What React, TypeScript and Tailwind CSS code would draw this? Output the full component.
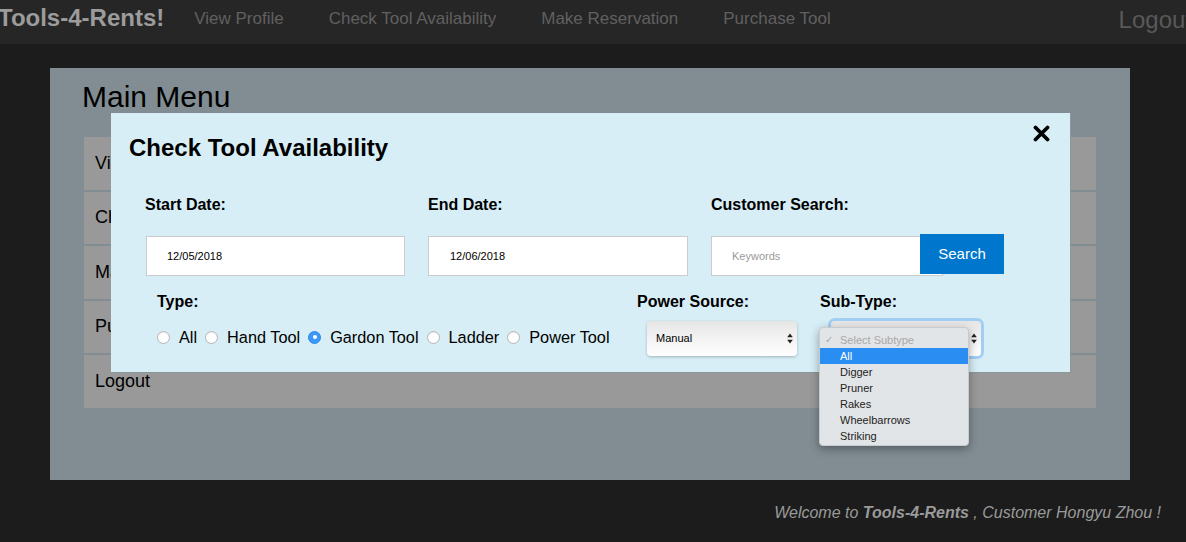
import { Fragment } from 'react';

const NAV_LINKS = ['View Profile', 'Check Tool Availability', 'Make Reservation', 'Purchase Tool'];
const MENU_ITEMS = ['View Profile', 'Check Tool Availability', 'Make Reservation', 'Purchase Tool', 'Logout'];
const TOOL_TYPES = ['All', 'Hand Tool', 'Gardon Tool', 'Ladder', 'Power Tool'];
const SUB_TYPES = ['All', 'Digger', 'Pruner', 'Rakes', 'Wheelbarrows', 'Striking'];

function SelectArrows() {
  return (
    <svg width="6" height="11" viewBox="0 0 6 11" className="shrink-0">
      <path d="M3 0.5 L5.8 4.2 L0.2 4.2 Z" fill="#222" />
      <path d="M3 10.5 L5.8 6.8 L0.2 6.8 Z" fill="#222" />
    </svg>
  );
}

function Radio({ checked }: { checked?: boolean }) {
  return checked ? (
    <span className="w-[13px] h-[13px] rounded-full bg-[#3b99fc] border border-[#2f86e6] flex items-center justify-center shrink-0">
      <span className="w-[4px] h-[4px] rounded-full bg-white" />
    </span>
  ) : (
    <span className="w-[13px] h-[13px] rounded-full bg-white border border-[#b5b5b5] shadow-[inset_0_1px_1px_rgba(0,0,0,0.08)] shrink-0" />
  );
}

export default function App() {
  return (
    <div
      className="w-[1186px] h-[542px] bg-[#1c1c1c] overflow-hidden flex flex-col"
      style={{ fontFamily: '"Liberation Sans", Arial, sans-serif' }}
    >
      {/* Navbar */}
      <div className="h-[44px] bg-[#262626] flex items-center overflow-hidden shrink-0">
        <span className="ml-[-2px] text-[24px] font-bold text-[#9c9c9c] leading-none pb-[9px] shrink-0">
          Tools-4-Rents!
        </span>
        <div className="flex items-center ml-[30px] gap-[45px] pb-[7px]">
          {NAV_LINKS.map((l) => (
            <span key={l} className="text-[17px] text-[#606060] whitespace-nowrap">
              {l}
            </span>
          ))}
        </div>
        <span className="ml-auto mr-[-6px] text-[24px] text-[#595959] leading-none pb-[5px] shrink-0">
          Logout
        </span>
      </div>

      {/* Main panel */}
      <div className="mt-[24px] ml-[50px] w-[1080px] h-[412px] bg-[#818d93] relative shrink-0">
        <h1 className="pl-[32px] pt-[12px] text-[30px] leading-[34px] text-black">Main Menu</h1>
        <div className="mx-[34px] mt-[23px] flex flex-col gap-[2px]">
          {MENU_ITEMS.map((m) => (
            <div key={m} className="h-[52.5px] bg-[#999999] flex items-center pl-[11px] text-[18px] text-black">
              {m}
            </div>
          ))}
        </div>

        {/* Modal */}
        <div className="absolute left-[61px] top-[45px] w-[960px] h-[260px] bg-[#d7eef6] border-r border-b border-[#8c979c] px-[18px] pt-[21px]">
          <div className="flex items-start justify-between">
            <h2 className="text-[24px] leading-[28px] font-bold text-black">Check Tool Availability</h2>
            <svg width="17" height="17" viewBox="0 0 17 17" className="mt-[-9px] mr-[2px]">
              <path d="M2.5 2.5 L14.5 14.5 M14.5 2.5 L2.5 14.5" stroke="#000" strokeWidth="3.8" strokeLinecap="round" />
            </svg>
          </div>

          <div className="grid grid-cols-[283px_283px_300px] ml-[16px] mt-[33px]">
            <div className="text-[16px] leading-[20px] font-bold text-black">Start Date:</div>
            <div className="text-[16px] leading-[20px] font-bold text-black">End Date:</div>
            <div className="text-[16px] leading-[20px] font-bold text-black">Customer Search:</div>

            <div className="mt-[21px] ml-[1px] w-[259px] h-[40px] bg-white border border-[#cccccc] flex items-center pl-[20px] text-[11px] text-black">
              12/05/2018
            </div>
            <div className="mt-[21px] w-[260px] h-[40px] bg-white border border-[#cccccc] flex items-center pl-[21px] text-[11px] text-black">
              12/06/2018
            </div>
            <div className="mt-[19px] flex items-start">
              <div className="mt-[2px] w-[232px] h-[40px] bg-white border border-[#cccccc] flex items-center pl-[20px] text-[11px] text-[#9a9a9a]">
                Keywords
              </div>
              <div className="ml-[-23px] w-[84px] h-[40px] bg-[#0077cc] text-white text-[15px] flex items-center justify-center relative">
                Search
              </div>
            </div>
          </div>

          <div className="flex mt-[16px]">
            <div className="ml-[28px] w-[480px]">
              <div className="text-[16px] leading-[20px] font-bold text-black">Type:</div>
              <div className="flex items-center mt-[15px] h-[20px]">
                {TOOL_TYPES.map((t, i) => (
                  <Fragment key={t}>
                    <span className={`flex items-center ${i > 0 ? 'ml-[8px]' : ''}`}>
                      <Radio checked={t === 'Gardon Tool'} />
                      <span className="ml-[9px] text-[16.3px] text-black whitespace-nowrap">{t}</span>
                    </span>
                  </Fragment>
                ))}
              </div>
            </div>

            <div className="w-[183px]">
              <div className="text-[16px] leading-[20px] font-bold text-black">Power Source:</div>
              <div className="mt-[9px] ml-[10px] w-[150px] h-[35px] rounded-[4px] bg-gradient-to-b from-[#e6e6e6] to-white shadow-[0_1px_3px_rgba(0,0,0,0.25)] flex items-center justify-between pl-[9px] pr-[4px] text-[11px] text-black">
                Manual
                <SelectArrows />
              </div>
            </div>

            <div className="relative">
              <div className="text-[16px] leading-[20px] font-bold text-black">Sub-Type:</div>
              <div className="mt-[9px] ml-[11px] w-[150px] h-[35px] rounded-[4px] bg-gradient-to-b from-[#e6e6e6] to-white shadow-[0_0_0_3px_rgba(120,180,240,0.55)] flex items-center justify-end pr-[4px]">
                <SelectArrows />
              </div>

              {/* Open dropdown */}
              <div className="absolute left-[-1px] top-[35px] w-[150px] h-[119px] rounded-[4px] bg-[#e2e5e7] shadow-[0_3px_10px_rgba(0,0,0,0.35)] border border-[#c9cccf] py-[4px] text-[11px] leading-[16px] z-10">
                <div className="flex items-center text-[#a8a8a8]">
                  <span className="w-[20px] pl-[5px] text-[10px]">✓</span>
                  Select Subtype
                </div>
                {SUB_TYPES.map((s, i) => (
                  <div
                    key={s}
                    className={`pl-[20px] ${i === 0 ? 'bg-[#2a8df2] text-white' : 'text-[#222]'}`}
                  >
                    {s}
                  </div>
                ))}
              </div>
            </div>
          </div>
        </div>
      </div>

      {/* Footer */}
      <div className="flex-1 flex items-center justify-end pr-[25px] pt-[4px]">
        <span className="italic text-[16px] text-[#9a9a9a]">
          Welcome to <span className="font-bold">Tools-4-Rents</span> , Customer Hongyu Zhou !
        </span>
      </div>
    </div>
  );
}
